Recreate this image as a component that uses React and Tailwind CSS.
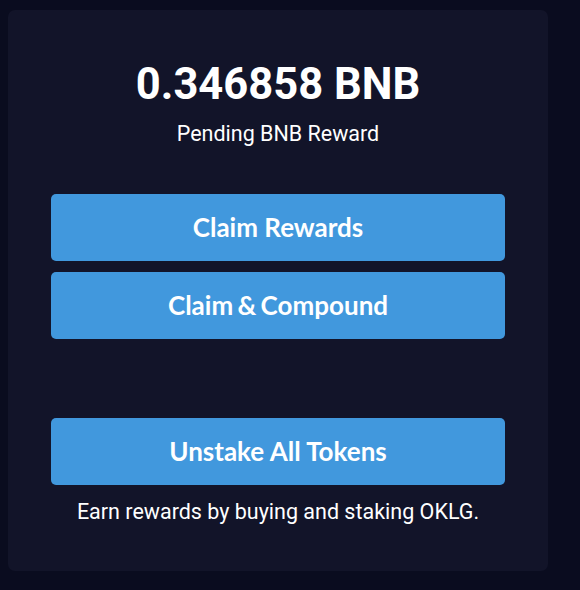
import React from "react";

const ActionButton = ({ children, className = "" }) => (
  <button
    type="button"
    className={`w-full h-[67px] rounded-[5px] bg-[#4198dd] text-white text-[26px] font-bold ${className}`}
    style={{ fontFamily: "Lato, 'Liberation Sans', sans-serif" }}
  >
    {children}
  </button>
);

export default function App() {
  return (
    <div
      className="w-[580px] h-[590px] bg-[#0a0c1f] pt-[10px] pl-[8px]"
      style={{ fontFamily: "Roboto, 'Liberation Sans', sans-serif" }}
    >
      <div className="w-[540px] h-[561px] rounded-[7px] bg-[#121429] px-[43px] pt-[50px] flex flex-col items-center">
        <h2 className="text-white text-[43.5px] font-bold leading-[50px]">
          0.346858 BNB
        </h2>
        <p className="text-white text-[21.5px] leading-[28px] mt-[10px]">
          Pending BNB Reward
        </p>

        <div className="w-full mt-[46px] flex flex-col gap-[11px]">
          <ActionButton>Claim Rewards</ActionButton>
          <ActionButton className="[word-spacing:-2px]">
            Claim &amp; Compound
          </ActionButton>
        </div>

        <div className="w-full mt-[79px]">
          <ActionButton>Unstake All Tokens</ActionButton>
        </div>

        <p className="text-white text-[21.5px] leading-[28px] mt-[13px]">
          Earn rewards by buying and staking OKLG.
        </p>
      </div>
    </div>
  );
}
